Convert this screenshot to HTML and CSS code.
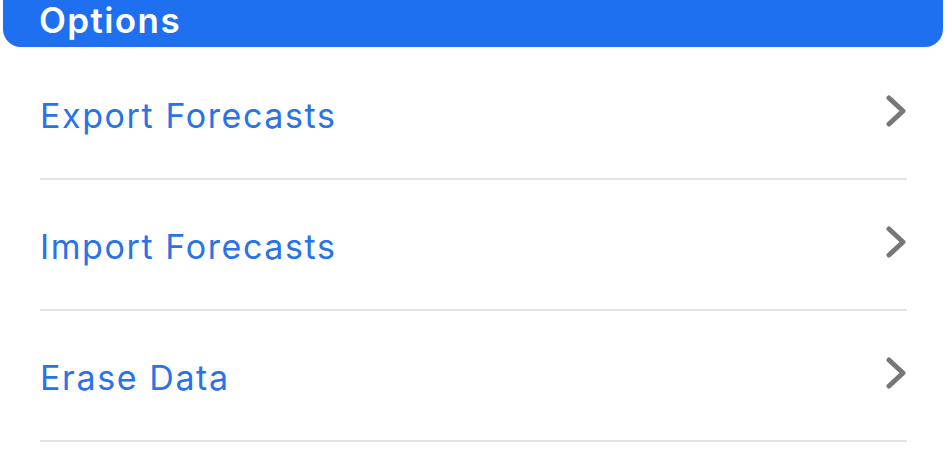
FILE: index.html
```html
<!DOCTYPE html>
<html lang="en">
<head>
    <meta charset="UTF-8">
    <meta name="viewport" content="width=device-width, initial-scale=1.0">
    <title>Options</title>
    <link rel="stylesheet" href="styles.css">
</head>
<body>
    <div class="header">
        <h1>Options</h1>
    </div>
    <div class="list">
        <div class="row">
            <span class="label">Export Forecasts</span>
            <svg class="chevron" width="20" height="32" viewBox="0 0 20 32"><path d="M3 3 L17 16 L3 29"/></svg>
        </div>
        <div class="row">
            <span class="label">Import Forecasts</span>
            <svg class="chevron" width="20" height="32" viewBox="0 0 20 32"><path d="M3 3 L17 16 L3 29"/></svg>
        </div>
        <div class="row">
            <span class="label">Erase Data</span>
            <svg class="chevron" width="20" height="32" viewBox="0 0 20 32"><path d="M3 3 L17 16 L3 29"/></svg>
        </div>
    </div>
</body>
</html>
```

FILE: styles.css
```css
body {
    font-family: Inter, "Open Sans", sans-serif;
    margin: 0;
    padding: 0;
    background-color: #fff;
    overflow: hidden;
}
.header {
    margin: 0 3px;
    height: 47px;
    background-color: #1f6ff1;
    border-radius: 0 0 18px 18px;
    display: flex;
    align-items: center;
    padding-left: 36px;
}
.header h1 {
    margin: 0;
    margin-top: -8px;
    font-size: 35px;
    font-weight: 600;
    letter-spacing: 1.4px;
    color: #fff;
}
.list {
    margin-top: 2px;
    padding: 0 39px 0 40px;
}
.row {
    height: 129px;
    border-bottom: 2px solid #e3e3e5;
    display: flex;
    align-items: center;
    justify-content: space-between;
}
.label {
    font-size: 34px;
    letter-spacing: 1.6px;
    color: #2a72e8;
    margin-top: 4px;
}
.chevron {
    margin-right: 1px;
    margin-top: -6px;
    fill: none;
    stroke: #77777b;
    stroke-width: 5;
    stroke-linecap: round;
    stroke-linejoin: round;
}
```
